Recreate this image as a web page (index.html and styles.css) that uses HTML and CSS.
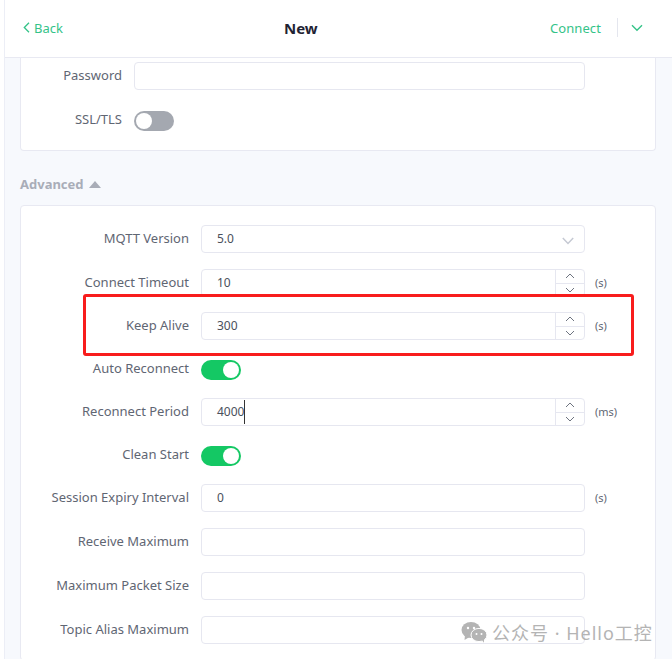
FILE: index.html
```html
<!DOCTYPE html>
<html lang="en">

<head>
    <meta charset="UTF-8">
    <meta name="viewport" content="width=device-width, initial-scale=1.0">
    <title>New connection</title>
    <link rel="stylesheet" href="styles.css">
</head>

<body>
    <div class="app">
        <header class="topbar">
            <a class="back">
                <svg width="7" height="11" viewBox="0 0 7 11"><path d="M6 .8 1.3 5.5 6 10.2" fill="none" stroke="currentColor" stroke-width="1.3"/></svg>
                Back
            </a>
            <h1 class="title">New</h1>
            <div class="actions">
                <span class="connect">Connect</span>
                <span class="divider"></span>
                <svg class="more" width="12" height="8" viewBox="0 0 12 8"><path d="M1 1.2 6 6.2 11 1.2" fill="none" stroke="currentColor" stroke-width="1.4"/></svg>
            </div>
        </header>

        <main class="content">
            <section class="card card-cut">
                <div class="row row-short">
                    <label class="label">Password</label>
                    <div class="input"></div>
                </div>
                <div class="row row-short">
                    <label class="label label-up">SSL/TLS</label>
                    <span class="switch"></span>
                </div>
            </section>

            <h2 class="section-title">Advanced <span class="caret"></span></h2>

            <section class="card card-adv">
                <div class="row row-tall">
                    <label class="label">MQTT Version</label>
                    <div class="input select">5.0
                        <svg width="12" height="8" viewBox="0 0 12 8"><path d="M.8 1 6 6.4 11.2 1" fill="none" stroke="#c5c9d3" stroke-width="1.5"/></svg>
                    </div>
                </div>
                <div class="row">
                    <label class="label">Connect Timeout</label>
                    <div class="input number">10
                        <div class="stepper">
                            <span class="step"><svg width="10" height="6" viewBox="0 0 10 6"><path d="M1 5 5 1 9 5" fill="none" stroke="#6e7480" stroke-width="1"/></svg></span>
                            <span class="step"><svg width="10" height="6" viewBox="0 0 10 6"><path d="M1 1 5 5 9 1" fill="none" stroke="#6e7480" stroke-width="1"/></svg></span>
                        </div>
                    </div>
                    <span class="unit">(s)</span>
                </div>
                <div class="row">
                    <label class="label">Keep Alive</label>
                    <div class="input number">300
                        <div class="stepper">
                            <span class="step"><svg width="10" height="6" viewBox="0 0 10 6"><path d="M1 5 5 1 9 5" fill="none" stroke="#6e7480" stroke-width="1"/></svg></span>
                            <span class="step"><svg width="10" height="6" viewBox="0 0 10 6"><path d="M1 1 5 5 9 1" fill="none" stroke="#6e7480" stroke-width="1"/></svg></span>
                        </div>
                    </div>
                    <span class="unit">(s)</span>
                </div>
                <div class="row">
                    <label class="label">Auto Reconnect</label>
                    <span class="switch on switch-low"></span>
                </div>
                <div class="row">
                    <label class="label">Reconnect Period</label>
                    <div class="input number"><span class="caret-text">4000</span>
                        <div class="stepper">
                            <span class="step"><svg width="10" height="6" viewBox="0 0 10 6"><path d="M1 5 5 1 9 5" fill="none" stroke="#6e7480" stroke-width="1"/></svg></span>
                            <span class="step"><svg width="10" height="6" viewBox="0 0 10 6"><path d="M1 1 5 5 9 1" fill="none" stroke="#6e7480" stroke-width="1"/></svg></span>
                        </div>
                    </div>
                    <span class="unit">(ms)</span>
                </div>
                <div class="row">
                    <label class="label">Clean Start</label>
                    <span class="switch on switch-low"></span>
                </div>
                <div class="row row-tall">
                    <label class="label">Session Expiry Interval</label>
                    <div class="input">0</div>
                    <span class="unit">(s)</span>
                </div>
                <div class="row row-tall">
                    <label class="label">Receive Maximum</label>
                    <div class="input"></div>
                </div>
                <div class="row row-tall">
                    <label class="label">Maximum Packet Size</label>
                    <div class="input"></div>
                </div>
                <div class="row row-tall">
                    <label class="label">Topic Alias Maximum</label>
                    <div class="input"></div>
                </div>
            </section>
        </main>

        <div class="highlight"></div>

        <div class="watermark">
            <svg width="26" height="21" viewBox="0 0 26 21">
                <ellipse cx="10" cy="8" rx="9.5" ry="8" fill="#b4b4b4"/>
                <path d="M4 13 3.5 18 8.5 15Z" fill="#b4b4b4"/>
                <ellipse cx="18" cy="13" rx="8" ry="6.6" fill="#b4b4b4" stroke="#fff" stroke-width="1"/>
                <path d="M21 18 23 20.8 23 16Z" fill="#b4b4b4"/>
                <circle cx="7" cy="6" r="1.2" fill="#fff"/>
                <circle cx="13" cy="6" r="1.2" fill="#fff"/>
                <circle cx="15.5" cy="12" r="1" fill="#fff"/>
                <circle cx="20.5" cy="12" r="1" fill="#fff"/>
            </svg>
            <span>公众号 · Hello工控</span>
        </div>
    </div>
</body>

</html>
```

FILE: styles.css
```css
html,
body {
    margin: 0;
    padding: 0;
    height: 100%;
    overflow: hidden;
    background-color: #fff;
}

body {
    font-family: "Noto Sans", Arial, sans-serif;
    font-size: 13px;
    color: #5f6673;
}

.app {
    position: relative;
    height: 659px;
    margin-left: 4px;
    background-color: #f7f9fd;
    border-left: 1px solid #eceef6;
    overflow: hidden;
}

.topbar {
    display: flex;
    align-items: center;
    justify-content: space-between;
    box-sizing: border-box;
    height: 58px;
    padding: 0 29px 2px 18px;
    background-color: #fff;
    border-bottom: 1px solid #e8e9f2;
    position: relative;
}

.back {
    display: flex;
    align-items: center;
    gap: 4px;
    color: #34c388;
}

.title {
    position: absolute;
    left: 279px;
    margin: 0;
    font-size: 15px;
    font-weight: 700;
    color: #1f2333;
}

.actions {
    display: flex;
    align-items: center;
    color: #34c388;
    letter-spacing: 0.1px;
}

.divider {
    width: 1px;
    height: 19px;
    margin: 0 13px 0 16px;
    background-color: #e4e6ee;
}

.content {
    padding: 0 16px 0 15px;
}

.card {
    background-color: #fff;
    border: 1px solid #e8e9f2;
    border-radius: 4px;
}

.card-cut {
    height: 88px;
    padding-top: 4px;
    border-top: 0;
    border-radius: 0 0 4px 4px;
}

.card-adv {
    padding-top: 19px;
}

.section-title {
    display: flex;
    align-items: center;
    gap: 5px;
    box-sizing: border-box;
    height: 54px;
    padding-top: 12px;
    margin: 0;
    font-size: 13px;
    font-weight: 700;
    color: #a9adb8;
}

.caret {
    width: 0;
    height: 0;
    border-left: 6px solid transparent;
    border-right: 6px solid transparent;
    border-bottom: 7px solid #a9adb8;
}

.row {
    display: flex;
    align-items: flex-start;
    height: 43px;
}

.row-tall {
    height: 44px;
}

.row-short {
    height: 49px;
}

.card-cut .label {
    width: 101px;
}

.card-cut .input {
    width: 451px;
}

.label {
    width: 168px;
    flex-shrink: 0;
    margin-right: 12px;
    text-align: right;
    line-height: 27px;
    white-space: nowrap;
}

.label-up {
    line-height: 17px;
}

.input {
    display: flex;
    align-items: center;
    box-sizing: border-box;
    position: relative;
    width: 384px;
    height: 28px;
    padding-left: 15px;
    background-color: #fff;
    border: 1px solid #e6e7f0;
    border-radius: 4px;
    font-size: 12px;
    line-height: 24px;
    color: #4a505c;
}

.select svg {
    position: absolute;
    right: 10px;
    top: 11px;
}

.stepper {
    display: flex;
    flex-direction: column;
    position: absolute;
    top: 0;
    right: 0;
    width: 28px;
    height: 26px;
    border-left: 1px solid #e6e7f0;
}

.step {
    display: flex;
    align-items: center;
    justify-content: center;
    flex: 1;
}

.step + .step {
    border-top: 1px solid #e6e7f0;
}

.unit {
    margin-left: 10px;
    font-size: 11px;
    line-height: 27px;
}

.caret-text {
    border-right: 1px solid #333;
}

.switch {
    display: block;
    position: relative;
    width: 40px;
    height: 20px;
    border-radius: 10px;
    background-color: #a4a8b0;
}

.switch-low {
    margin-top: 5px;
}

.switch::after {
    content: "";
    position: absolute;
    top: 2px;
    left: 2px;
    width: 16px;
    height: 16px;
    border-radius: 50%;
    background-color: #fff;
}

.switch.on {
    background-color: #14c864;
}

.switch.on::after {
    left: 22px;
}

.highlight {
    position: absolute;
    left: 78px;
    top: 294px;
    width: 545px;
    height: 56px;
    border: 3px solid #f81c1c;
    border-radius: 3px;
}

.watermark {
    display: flex;
    align-items: center;
    gap: 5px;
    position: absolute;
    left: 456px;
    top: 619px;
    font-size: 18px;
    letter-spacing: 1px;
    color: #b4b4b4;
    font-family: "Noto Sans", "Noto Sans CJK SC", sans-serif;
    white-space: nowrap;
}
```
